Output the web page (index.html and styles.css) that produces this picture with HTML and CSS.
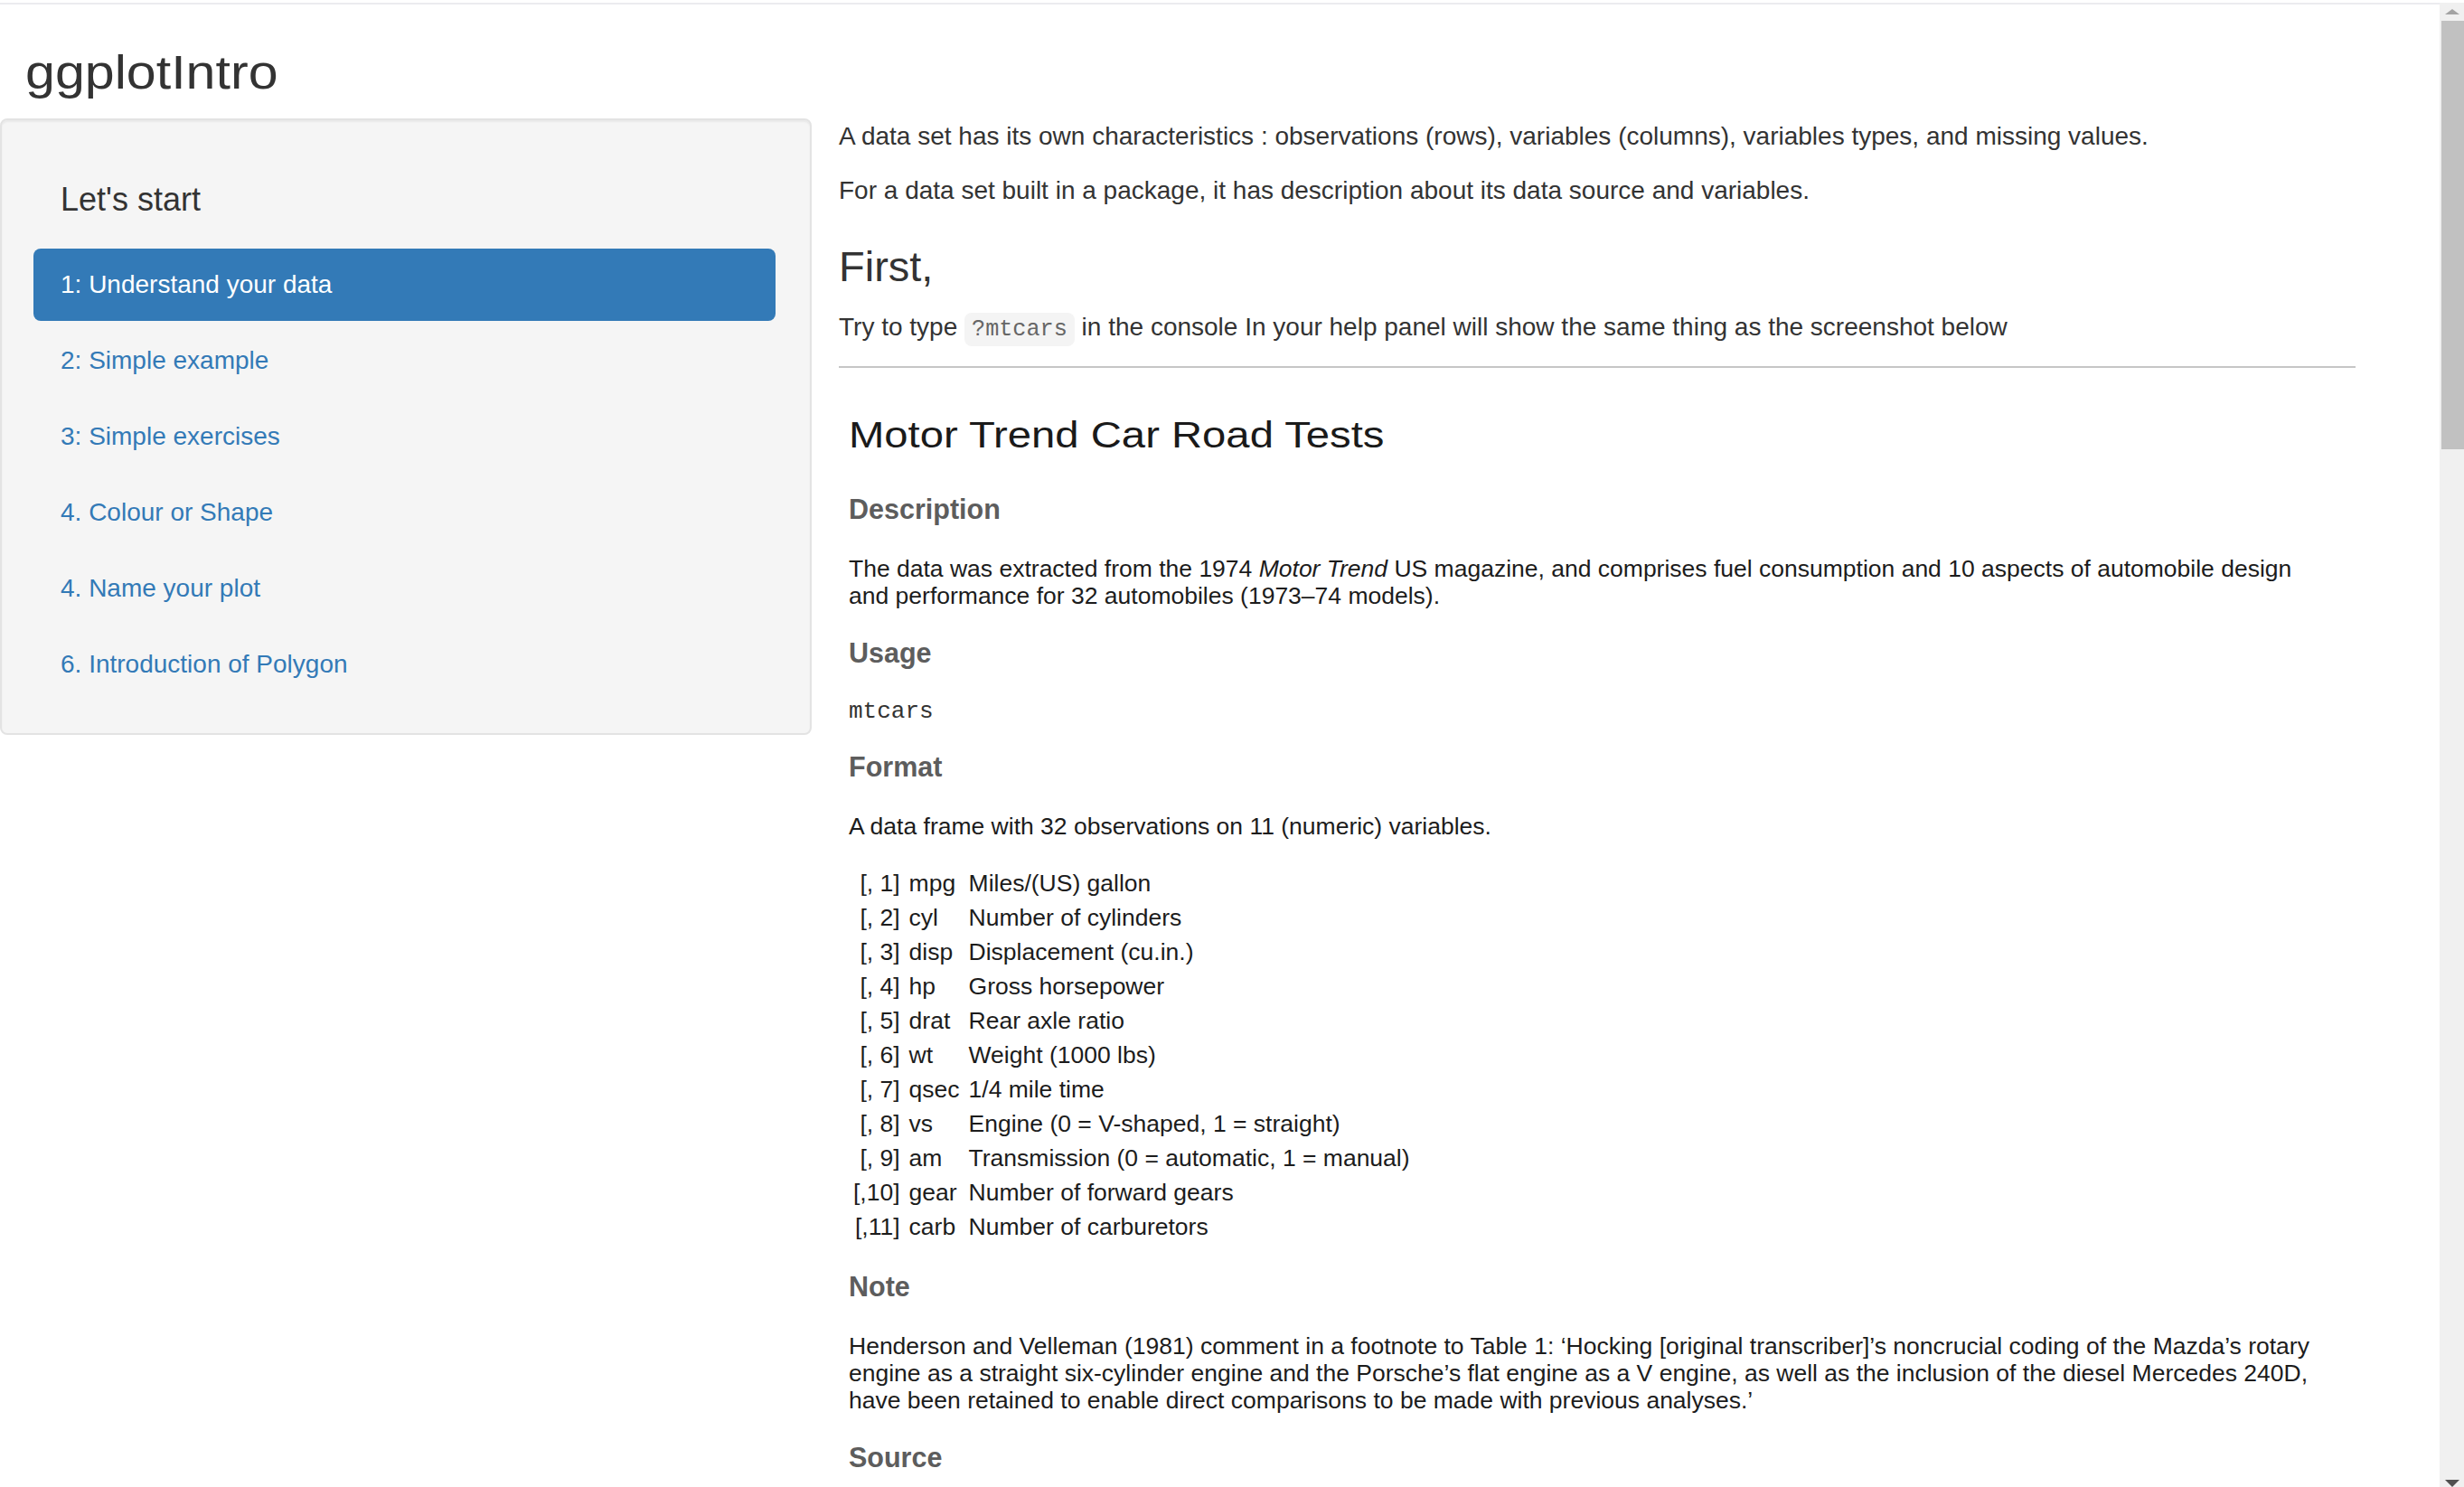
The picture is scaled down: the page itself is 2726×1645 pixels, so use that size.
FILE: index.html
```html
<!DOCTYPE html>
<html lang="en">
<head>
<meta charset="utf-8">
<title>ggplotIntro</title>
<link rel="stylesheet" href="styles.css">
</head>
<body>
<div class="window">
  <div class="page">
    <h2 class="app-title"><span class="stretch">ggplotIntro</span></h2>
    <div class="layout">
      <aside class="well">
        <h4 class="well-title">Let's start</h4>
        <ul class="nav">
          <li><a class="active" href="#">1: Understand your data</a></li>
          <li><a href="#">2: Simple example</a></li>
          <li><a href="#">3: Simple exercises</a></li>
          <li><a href="#">4. Colour or Shape</a></li>
          <li><a href="#">4. Name your plot</a></li>
          <li><a href="#">6. Introduction of Polygon</a></li>
        </ul>
      </aside>
      <main class="content">
        <p class="para">A data set has its own characteristics : observations (rows), variables (columns), variables types, and missing values.</p>
        <p class="para">For a data set built in a package, it has description about its data source and variables.</p>
        <h3 class="section-title">First,</h3>
        <p class="para">Try to type <code class="inline-code">?mtcars</code> in the console In your help panel will show the same thing as the screenshot below</p>
        <div class="helpshot">
          <h2 class="rd-title"><span class="stretch-rd">Motor Trend Car Road Tests</span></h2>
          <h3 class="rd-h">Description</h3>
          <p class="rd-p">The data was extracted from the 1974 <i>Motor Trend</i> US magazine, and comprises fuel consumption and 10 aspects of automobile design and performance for 32 automobiles (1973–74 models).</p>
          <h3 class="rd-h">Usage</h3>
          <pre class="rd-pre">mtcars</pre>
          <h3 class="rd-h">Format</h3>
          <p class="rd-p">A data frame with 32 observations on 11 (numeric) variables.</p>
          <table class="rd-table">
            <tr><td class="idx">[, 1]</td><td>mpg</td><td>Miles/(US) gallon</td></tr>
            <tr><td class="idx">[, 2]</td><td>cyl</td><td>Number of cylinders</td></tr>
            <tr><td class="idx">[, 3]</td><td>disp</td><td>Displacement (cu.in.)</td></tr>
            <tr><td class="idx">[, 4]</td><td>hp</td><td>Gross horsepower</td></tr>
            <tr><td class="idx">[, 5]</td><td>drat</td><td>Rear axle ratio</td></tr>
            <tr><td class="idx">[, 6]</td><td>wt</td><td>Weight (1000 lbs)</td></tr>
            <tr><td class="idx">[, 7]</td><td>qsec</td><td>1/4 mile time</td></tr>
            <tr><td class="idx">[, 8]</td><td>vs</td><td>Engine (0 = V-shaped, 1 = straight)</td></tr>
            <tr><td class="idx">[, 9]</td><td>am</td><td>Transmission (0 = automatic, 1 = manual)</td></tr>
            <tr><td class="idx">[,10]</td><td>gear</td><td>Number of forward gears</td></tr>
            <tr><td class="idx">[,11]</td><td>carb</td><td>Number of carburetors</td></tr>
          </table>
          <h3 class="rd-h">Note</h3>
          <p class="rd-p">Henderson and Velleman (1981) comment in a footnote to Table 1: ‘Hocking [original transcriber]’s noncrucial coding of the Mazda’s rotary engine as a straight six-cylinder engine and the Porsche’s flat engine as a V engine, as well as the inclusion of the diesel Mercedes 240D, have been retained to enable direct comparisons to be made with previous analyses.’</p>
          <h3 class="rd-h">Source</h3>
        </div>
      </main>
    </div>
  </div>
  <div class="scrollbar">
    <div class="sb-btn sb-up"><svg width="16" height="6" viewBox="0 0 16 6"><polygon points="8,0 16,6 0,6" fill="#a3a3a3"/></svg></div>
    <div class="sb-thumb"></div>
    <div class="sb-track"></div>
    <div class="sb-btn sb-down"><svg width="16" height="8" viewBox="0 0 16 8"><polygon points="0,0 16,0 8,8" fill="#505050"/></svg></div>
  </div>
</div>
</body>
</html>
```
FILE: styles.css
```css
html, body {
  margin: 0;
  padding: 0;
  height: 100%;
  overflow: hidden;
  background: #ffffff;
}

body {
  font-family: "Liberation Sans", Arial, sans-serif;
  color: #333333;
}

.window {
  display: flex;
  height: calc(100vh - 3px);
  margin-top: 3px;
}

.page {
  flex: 1;
  min-width: 0;
  border-top: 2px solid #ebebef;
  overflow: hidden;
}

.app-title {
  font-size: 51px;
  font-weight: normal;
  line-height: 56px;
  margin: 48px 0 22px 28px;
  color: #333333;
}

.stretch {
  display: inline-block;
  transform: scaleX(1.16);
  transform-origin: 0 0;
}

.layout {
  display: flex;
  align-items: flex-start;
  gap: 30px;
}

.well {
  flex: none;
  width: 898px;
  box-sizing: border-box;
  background: #f5f5f5;
  border: 2px solid #e3e3e3;
  border-radius: 8px;
  box-shadow: inset 0 2px 2px rgba(0, 0, 0, 0.05);
  padding: 36px 38px 36px 35px;
}

.well-title {
  font-size: 36px;
  font-weight: normal;
  line-height: 40px;
  margin: 31.5px 0 34.5px 30px;
  color: #333333;
}

.nav {
  list-style: none;
  margin: 0;
  padding: 0;
  display: flex;
  flex-direction: column;
  gap: 4px;
}

.nav a {
  display: block;
  padding: 20px 30px;
  font-size: 28px;
  line-height: 40px;
  color: #337ab7;
  text-decoration: none;
  border-radius: 8px;
}

.nav a.active {
  background: #337ab7;
  color: #ffffff;
}

.content {
  flex: none;
  width: 1678px;
  font-size: 28px;
  line-height: 40px;
}

.para {
  margin: 0 0 20px;
}

.section-title {
  font-size: 47px;
  font-weight: normal;
  line-height: 52.8px;
  margin: 38px 0 20px;
  color: #333333;
}

.inline-code {
  font-family: "Liberation Mono", "Courier New", monospace;
  font-size: 25.2px;
  padding: 4px 8px;
  background: #f4f4f4;
  color: #666666;
  border-radius: 8px;
}

.helpshot {
  margin-top: 18px;
  border-top: 2px solid #c6c6c6;
  padding: 0 26px 0 11px;
  color: #1c1c1c;
}

.rd-title {
  font-size: 41px;
  font-weight: normal;
  line-height: 48px;
  margin: 49.8px 0 0;
  color: #1a1a1a;
}

.stretch-rd {
  display: inline-block;
  transform: scaleX(1.152);
  transform-origin: 0 0;
}

.rd-h {
  font-size: 30.5px;
  font-weight: bold;
  line-height: 36px;
  color: #5d5d5d;
  margin: 29.5px 0 0;
}

.rd-title + .rd-h {
  margin-top: 40.5px;
}

.rd-pre + .rd-h {
  margin-top: 28px;
}

.rd-p {
  font-size: 26.5px;
  line-height: 30px;
  margin: 33px 0 0;
}

.rd-pre {
  font-family: "Liberation Mono", "Courier New", monospace;
  font-size: 26px;
  line-height: 30px;
  margin: 32.7px 0 0;
  color: #333333;
}

.rd-table {
  border-collapse: collapse;
  margin-top: 28.5px;
  font-size: 26.5px;
  line-height: 38px;
}

.rd-table td {
  padding: 0 5px;
  vertical-align: baseline;
  white-space: nowrap;
}

.rd-table td.idx {
  text-align: right;
}

.scrollbar {
  flex: none;
  width: 27px;
  background: #f0f0f0;
  display: flex;
  flex-direction: column;
}

.sb-btn {
  display: flex;
  justify-content: center;
  flex: none;
}

.sb-up {
  height: 20px;
  align-items: center;
}

.sb-down {
  height: 8px;
  align-items: flex-end;
}

.sb-btn svg {
  display: block;
}

.sb-thumb {
  flex: none;
  height: 474px;
  margin-left: 2px;
  background: #c1c1c1;
}

.sb-track {
  flex: 1;
}
```
